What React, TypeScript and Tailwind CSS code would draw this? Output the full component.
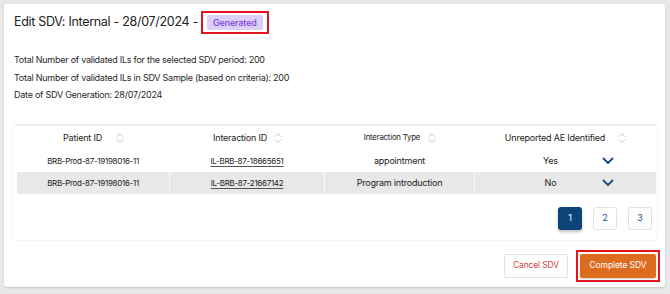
import React from 'react';

function SortIcon() {
  return (
    <svg width="8" height="12" viewBox="0 0 8 12" fill="none" className="shrink-0">
      <path d="M1 4.5L4 1.5L7 4.5" stroke="#c4c4c4" strokeWidth="1" strokeLinecap="round" strokeLinejoin="round" />
      <path d="M1 7.5L4 10.5L7 7.5" stroke="#c4c4c4" strokeWidth="1" strokeLinecap="round" strokeLinejoin="round" />
    </svg>
  );
}

function ChevronDown() {
  return (
    <svg width="12" height="8" viewBox="0 0 12 8" fill="none" className="shrink-0">
      <path d="M1.5 1.5L6 6L10.5 1.5" stroke="#1a4c86" strokeWidth="1.8" strokeLinecap="round" strokeLinejoin="round" />
    </svg>
  );
}

const rows = [
  { patient: 'BRB-Prod-87-19198016-11', interaction: 'IL-BRB-87-18665651', type: 'appointment', ae: 'Yes' },
  { patient: 'BRB-Prod-87-19198016-11', interaction: 'IL-BRB-87-21667142', type: 'Program introduction', ae: 'No' },
];

export default function App() {
  return (
    <div className="h-[294px] w-[670px] bg-[#e8e8e8] pt-[4px] pl-[4px] pr-[5px] font-['Inter',sans-serif] text-[#1f1f1f]">
      <div className="h-[283px] rounded-[3px] bg-white shadow-[0_1px_2px_rgba(0,0,0,0.15)] flex flex-col pl-[9px] pr-[5px]">
        {/* Title */}
        <div className="flex items-center mt-[7px] pl-[1px]">
          <h1 className="text-[12.5px] tracking-[-0.3px] leading-none text-[#222]">Edit SDV: Internal - 28/07/2024 -</h1>
          <div className="ml-[3px] border-2 border-[#e3141c] px-[4px] py-[2px]">
            <span className="block rounded-[2px] bg-[#ddd0f8] px-[6px] h-[15px] leading-[15px] text-[9px] tracking-[-0.15px] font-medium text-[#7e3fdc]">
              Generated
            </span>
          </div>
        </div>

        {/* Info */}
        <div className="mt-[17px] pl-[1px] text-[9px] tracking-[-0.25px] leading-[17.5px] text-[#1f1f1f]">
          <p>Total Number of validated ILs for the selected SDV period: 200</p>
          <p>Total Number of validated ILs in SDV Sample (based on criteria): 200</p>
          <p>Date of SDV Generation: 28/07/2024</p>
        </div>

        {/* Table card */}
        <div className="mt-[21px] mr-[3px] rounded-[2px] bg-white shadow-[0_0_2px_rgba(0,0,0,0.18)] pl-[4px] pr-[1px] pb-[10px]">
          <div className="border-t border-[#ececec]">
            <div className="grid grid-cols-[153px_155px_150px_1fr] h-[24px] items-center text-[9px] tracking-[-0.2px] text-[#222]">
              <div className="flex items-center justify-center gap-[14px]">
                <span>Patient ID</span>
                <SortIcon />
              </div>
              <div className="flex items-center justify-center gap-[7px]">
                <span>Interaction ID</span>
                <SortIcon />
              </div>
              <div className="flex items-center justify-center gap-[8px]">
                <span className="text-[7.8px]">Interaction Type</span>
                <SortIcon />
              </div>
              <div className="flex items-center justify-center gap-[13px]">
                <span>Unreported AE Identified</span>
                <SortIcon />
              </div>
            </div>
            {rows.map((r, i) => (
              <div
                key={r.interaction}
                className={`grid grid-cols-[153px_155px_150px_1fr] h-[22px] items-center text-[8px] tracking-[-0.3px] text-[#222] ${i % 2 === 1 ? 'bg-[#e8e8e8]' : 'bg-white'}`}
              >
                <div className="h-full flex items-center justify-center border-r border-white/70">{r.patient}</div>
                <div className="h-full flex items-center justify-center border-r border-white/70">
                  <span className="underline underline-offset-2 decoration-[#555]">{r.interaction}</span>
                </div>
                <div className="h-full flex items-center justify-center border-r border-white/70 text-[9px] tracking-[-0.2px]">{r.type}</div>
                <div className="h-full flex items-center justify-center pl-[8px] text-[9px] tracking-[-0.2px]">
                  <span className="w-[50px] text-center">{r.ae}</span>
                  <span className="ml-[26px] flex items-center">
                    <ChevronDown />
                  </span>
                </div>
              </div>
            ))}
          </div>

          {/* Pagination */}
          <div className="mt-[13px] flex justify-end gap-[11px] pr-[4px]">
            <button className="w-[24px] h-[23px] rounded-[3px] bg-[#0b4479] text-white text-[9px] shadow-[0_2px_3px_rgba(0,0,0,0.25)]">
              1
            </button>
            <button className="w-[24px] h-[23px] rounded-[3px] bg-white border border-[#e3e3e3] text-[#1a4c86] text-[9px]">
              2
            </button>
            <button className="w-[24px] h-[23px] rounded-[3px] bg-white border border-[#e3e3e3] text-[#1a4c86] text-[9px]">
              3
            </button>
          </div>
        </div>

        {/* Actions */}
        <div className="mt-[10px] flex justify-end items-center gap-[8px]">
          <button className="w-[64px] h-[24px] rounded-[2px] bg-white border border-[#e2e2e2] text-[8.5px] tracking-[-0.15px] text-[#d4423f]">
            Cancel SDV
          </button>
          <div className="border-2 border-[#e3141c] p-[2px]">
            <button className="block w-[76px] h-[24px] rounded-[2px] bg-[#de6c1f] text-[8.5px] tracking-[-0.1px] text-white shadow-[0_1px_2px_rgba(0,0,0,0.2)]">
              Complete SDV
            </button>
          </div>
        </div>
      </div>
    </div>
  );
}
